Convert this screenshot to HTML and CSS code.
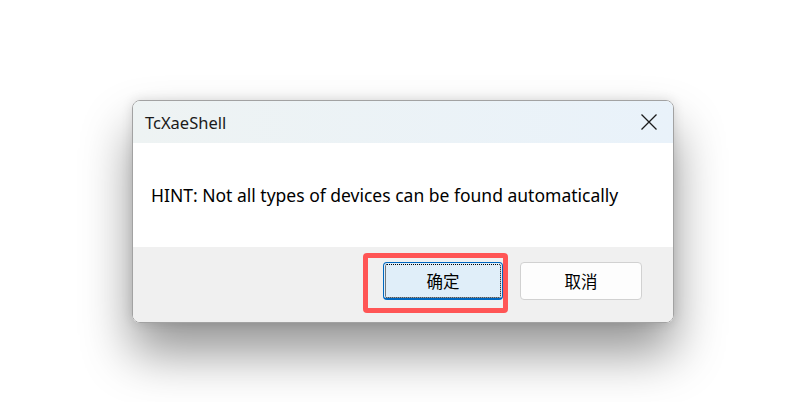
FILE: index.html
```html
<!DOCTYPE html>
<html lang="en">
<head>
<meta charset="utf-8">
<title>TcXaeShell</title>
<link rel="stylesheet" href="styles.css">
</head>
<body>
<div class="stage">
  <div class="dialog">
    <div class="titlebar">
      <span class="title">TcXaeShell</span>
      <span class="close" aria-label="Close">
        <svg width="16" height="16" viewBox="0 0 16 16"><path d="M0.5 0.5 L15.5 15.5 M15.5 0.5 L0.5 15.5" stroke="#1b1b1b" stroke-width="1.3" fill="none"/></svg>
      </span>
    </div>
    <div class="content">
      <p class="message">HINT: Not all types of devices can be found automatically</p>
    </div>
    <div class="footer">
      <button class="btn btn-default">确定</button>
      <button class="btn btn-cancel">取消</button>
      <div class="highlight"></div>
    </div>
  </div>
</div>
</body>
</html>
```

FILE: styles.css
```css
html, body {
  margin: 0;
  padding: 0;
  background: #ffffff;
}
.stage {
  padding: 100px 0 0 132px;
  height: 402px;
  box-sizing: border-box;
}
.dialog {
  width: 542px;
  height: 223px;
  box-sizing: border-box;
  border: 1px solid #a2a2a2;
  border-radius: 8px;
  overflow: hidden;
  display: flex;
  flex-direction: column;
  font-family: "Noto Sans", "Noto Sans CJK SC", sans-serif;
  color: #000;
  box-shadow: 0 30px 50px rgba(0, 0, 0, 0.42), 0 0 12px rgba(0, 0, 0, 0.12);
  position: relative;
}
.titlebar {
  height: 42px;
  flex: none;
  display: flex;
  align-items: center;
  justify-content: space-between;
  padding: 0 16px 0 12px;
  background: linear-gradient(to right, #eef3f3, #e9f2fa);
}
.title {
  font-size: 16.5px;
  color: #1a1a1a;
}
.close {
  display: flex;
  width: 16px;
  height: 16px;
}
.content {
  height: 104px;
  flex: none;
  background: #ffffff;
  display: flex;
  align-items: center;
  padding-left: 18px;
}
.message {
  margin: 0;
  font-size: 17.5px;
  color: #000;
}
.footer {
  flex: 1;
  background: #f0f0f0;
  display: flex;
  justify-content: flex-end;
  align-items: flex-start;
  gap: 17px;
  padding: 15px 31px 0 0;
  position: relative;
}
.btn {
  width: 120px;
  height: 38px;
  box-sizing: border-box;
  border: 1px solid #d1d1d1;
  border-radius: 4px;
  background: #fdfdfd;
  font-family: "Noto Sans CJK SC", sans-serif;
  font-size: 16.5px;
  color: #000;
  padding: 0;
}
.btn-cancel {
  width: 122px;
}
.btn-default {
  background: #e0eef9;
  border: 1px solid #0067c0;
  border-bottom-width: 2px;
  outline: 1px dotted #000;
  outline-offset: -3px;
}
.highlight {
  position: absolute;
  left: 230px;
  top: 6px;
  width: 145px;
  height: 60px;
  box-sizing: border-box;
  border: 5px solid #ff5555;
  border-radius: 4px;
}
```
